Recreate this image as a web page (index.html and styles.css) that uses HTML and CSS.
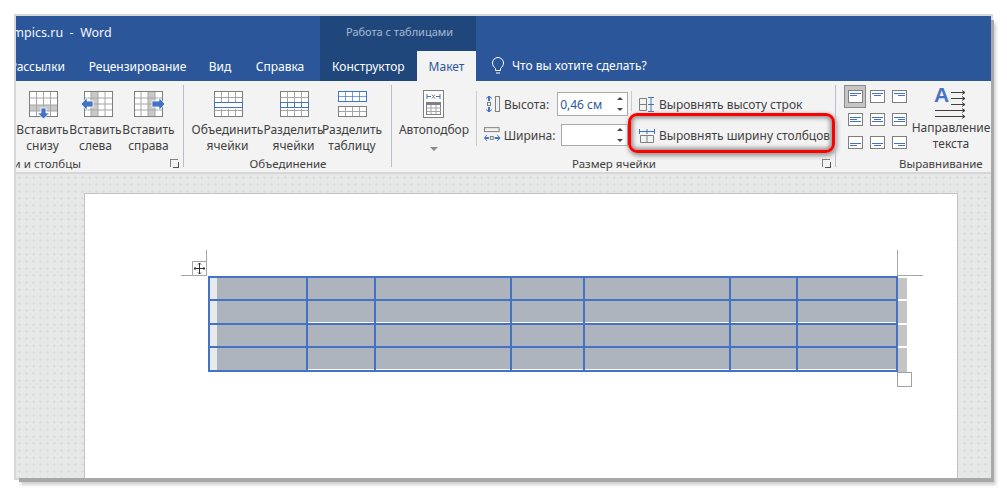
FILE: index.html
```html
<!DOCTYPE html>
<html lang="ru">
<head>
<meta charset="utf-8">
<title>Word</title>
<link rel="stylesheet" href="styles.css">
</head>
<body>
<div class="window">
  <header class="head">
    <div class="titlerow">
      <div class="doctitle"><span class="clip-title">Lumpics.ru&nbsp; -&nbsp; Word</span></div>
      <div class="context">Работа с таблицами</div>
    </div>
    <nav class="tabs">
      <span class="tab t-mail">Рассылки</span>
      <span class="tab t-rev">Рецензирование</span>
      <span class="tab t-view">Вид</span>
      <span class="tab t-help">Справка</span>
      <span class="tab t-ctor">Конструктор</span>
      <span class="tab t-layout">Макет</span>
      <span class="tell">
        <svg width="14" height="19" viewBox="0 0 14 19" fill="none" stroke="#fff" stroke-width="1"><path d="M4.5 12.5C3 11 1.5 9.500 1.500 7a5.500 5.500 0 0 1 11 0c0 2.500-1.500 4-3 5.500v2h-5z"/><path d="M5 17h4"/></svg>
        <span>Что вы хотите сделать?</span>
      </span>
    </nav>
  </header>

  <section class="ribbon">
    <div class="group g-rows">
      <div class="gbody">
        <div class="rb w53">
          <svg class="ic" width="32" height="32" viewBox="0 0 32 32"><rect x="2.500" y="1.500" width="28" height="25" fill="#fff" stroke="#7f7f7f"/><rect x="3" y="15" width="27" height="6" fill="#c9c9c9"/><path d="M3 8h27M3 15h27M3 21h27M9.500 2v24M16.500 2v24M23.500 2v24" stroke="#a6a6a6" fill="none"/><path d="M14 18h5v5h3.500l-6 6-6-6H14z" fill="#4472c4" stroke="#fff" stroke-width=".8"/></svg>
          <span class="lb">Вставить<br>снизу</span>
        </div>
        <div class="rb w53">
          <svg class="ic" width="32" height="32" viewBox="0 0 32 32"><rect x="4.500" y="1.500" width="28" height="25" fill="#fff" stroke="#7f7f7f"/><rect x="11" y="2" width="7" height="24" fill="#c9c9c9"/><path d="M5 8h27M5 14h27M5 20h27M11 2v24M18 2v24M25 2v24" stroke="#a6a6a6" fill="none"/><path d="M13 11v6H7v3.500l-6-6.500 6-6.500V11z" fill="#4472c4" stroke="#fff" stroke-width=".8"/></svg>
          <span class="lb">Вставить<br>слева</span>
        </div>
        <div class="rb w53">
          <svg class="ic" width="32" height="32" viewBox="0 0 32 32"><rect x="1.500" y="1.500" width="28" height="25" fill="#fff" stroke="#7f7f7f"/><rect x="15" y="2" width="7" height="24" fill="#c9c9c9"/><path d="M2 8h27M2 14h27M2 20h27M8 2v24M15 2v24M22 2v24" stroke="#a6a6a6" fill="none"/><path d="M19 11v6h7v3.500l6-6.500-6-6.500V11z" fill="#4472c4" stroke="#fff" stroke-width=".8"/></svg>
          <span class="lb">Вставить<br>справа</span>
        </div>
      </div>
      <div class="glabel"><span class="clip-label">Строки и столбцы</span></div>
      <span class="launch"></span>
    </div>

    <div class="group g-merge">
      <div class="gbody">
        <div class="rb w67">
          <svg class="ic" width="30" height="32" viewBox="0 0 30 32"><rect x="1.500" y="1.500" width="28" height="25" fill="#fff" stroke="#7f7f7f"/><path d="M2 7.500h27M2 20.500h27M8.500 2v11M15.500 2v11M22.500 2v11M8.500 19v7M15.500 19v7M22.500 19v7" stroke="#a6a6a6" fill="none"/><rect x="1.500" y="12.500" width="28" height="5" fill="#fff" stroke="#4472c4"/></svg>
          <span class="lb">Объединить<br>ячейки</span>
        </div>
        <div class="rb w65">
          <svg class="ic" width="30" height="32" viewBox="0 0 30 32"><rect x="1.500" y="1.500" width="28" height="25" fill="#fff" stroke="#7f7f7f"/><path d="M2 7.500h27M2 20.500h27M8.500 2v11M15.500 2v11M22.500 2v11M8.500 19v7M15.500 19v7M22.500 19v7" stroke="#a6a6a6" fill="none"/><rect x="1.500" y="12.500" width="28" height="5" fill="#fff" stroke="#4472c4"/><path d="M8.500 13v5M15.500 13v5M22.500 13v5" stroke="#4472c4"/></svg>
          <span class="lb">Разделить<br>ячейки</span>
        </div>
        <div class="rb w52">
          <svg class="ic" width="30" height="32" viewBox="0 0 30 32"><rect x="1.500" y="1.500" width="28" height="10" fill="#fff" stroke="#4472c4"/><path d="M2 6.500h27M8.500 2v9M15.500 2v9M22.500 2v9" stroke="#4472c4" fill="none" opacity=".7"/><rect x="1.500" y="16.500" width="28" height="10" fill="#fff" stroke="#7f7f7f"/><path d="M2 21.500h27M8.500 17v9M15.500 17v9M22.500 17v9" stroke="#a6a6a6" fill="none"/></svg>
          <span class="lb">Разделить<br>таблицу</span>
        </div>
      </div>
      <div class="glabel">Объединение</div>
    </div>

    <div class="group g-size">
      <div class="gbody sizebody">
        <div class="rb w84">
          <svg class="ic" width="22" height="32" viewBox="0 0 22 32"><rect x=".5" y=".5" width="20" height="27" fill="#fff" stroke="#7f7f7f"/><path d="M4 4v5M17 4v5M4 6.500h4M13 6.500h4" stroke="#4472c4" fill="none"/><path d="M9 4.500l3 4M12 4.500l-3 4" stroke="#7f7f7f" fill="none"/><rect x="3" y="12" width="15" height="3" fill="#7f7f7f"/><rect x="3.500" y="14.500" width="14" height="10" fill="#fff" stroke="#7f7f7f"/><path d="M4 18h14M4 21.500h14M8 15v9M13 15v9" stroke="#a6a6a6" fill="none"/></svg>
          <span class="lb">Автоподбор</span>
          <span class="caret"></span>
        </div>
        <div class="vsep"></div>
        <div class="dims">
          <div class="dimrow">
            <svg width="17" height="16" viewBox="0 0 17 16" fill="none"><rect x="11.500" y=".5" width="4" height="15" stroke="#7f7f7f"/><rect x="3.500" y="6.500" width="3" height="3" stroke="#7f7f7f"/><path d="M5 0v5M5 11v5" stroke="#4472c4" stroke-width="2"/><path d="M2 2.500L5 0l3 2.500M2 13.500L5 16l3-2.500" stroke="#4472c4"/></svg>
            <span class="dimlabel">Высота:</span>
            <span class="spin s-h"><span class="val">0,46 см</span><span class="arrows"><i class="up"></i><i class="dn"></i></span></span>
          </div>
          <div class="dimrow second">
            <svg width="17" height="16" viewBox="0 0 17 16" fill="none"><rect x=".5" y=".5" width="15" height="4" stroke="#7f7f7f"/><rect x="6.500" y="9.500" width="3" height="3" stroke="#7f7f7f"/><path d="M1 11h4M11 11h5" stroke="#4472c4" stroke-width="2"/><path d="M3 8l-2.500 3L3 14M13.500 8l3 3-3 3" stroke="#4472c4"/></svg>
            <span class="dimlabel">Ширина:</span>
            <span class="spin s-w"><span class="val"></span><span class="arrows"><i class="up"></i><i class="dn"></i></span></span>
          </div>
        </div>
        <div class="vsep short"></div>
        <div class="dist">
          <div class="distrow">
            <svg width="16" height="15" viewBox="0 0 16 15" fill="none"><path d="M.5 1.500h7v12h-7zM.5 7.500h7" stroke="#7f7f7f"/><path d="M9 .5h6M9 14.500h6M9 7.500h6M12 1v13" stroke="#4472c4"/></svg>
            <span>Выровнять высоту строк</span>
          </div>
          <div class="distrow row-b">
            <svg width="16" height="15" viewBox="0 0 16 15" fill="none"><path d="M.5 1v5M15.500 1v5M8 1v5M0 3.500h16" stroke="#4472c4"/><path d="M1.500 7.500h13v7h-13zM8 8v6" stroke="#7f7f7f"/></svg>
            <span>Выровнять ширину столбцов</span>
          </div>
          <div class="redbox"></div>
        </div>
      </div>
      <div class="glabel size-label">Размер ячейки</div>
      <span class="launch"></span>
    </div>

    <div class="group g-align">
      <div class="gbody">
        <div class="aligngrid">
          <span class="ac on"><b class="al tl"></b></span>
          <span class="ac"><b class="al tc"></b></span>
          <span class="ac"><b class="al tr"></b></span>
          <span class="ac"><b class="al ml"></b></span>
          <span class="ac"><b class="al mc"></b></span>
          <span class="ac"><b class="al mr"></b></span>
          <span class="ac"><b class="al bl"></b></span>
          <span class="ac"><b class="al bc"></b></span>
          <span class="ac"><b class="al br"></b></span>
        </div>
        <div class="rb w76">
          <span class="dir">
            <span class="bigA">A</span>
            <svg class="dirlines" width="33" height="32" viewBox="0 0 33 32" fill="none" stroke="#404040"><path d="M17 2.500h14M28 .5l3 2-3 2M17 8.500h14M28 6.500l3 2-3 2M17 14.500h14M28 12.500l3 2-3 2M1 20.500h30M28 18.500l3 2-3 2M1 26.500h30M28 24.500l3 2-3 2M1 32.500h30"/></svg>
          </span>
          <span class="lb">Направление<br>текста</span>
        </div>
      </div>
      <div class="glabel align-label">Выравнивание</div>
    </div>
  </section>

  <main class="docarea">
    <div class="page">
      <div class="tablewrap">
        <span class="mark m-lv"></span>
        <span class="mark m-lh"></span>
        <span class="mark m-rv"></span>
        <span class="mark m-rh"></span>
        <span class="movebox">
          <svg width="11" height="11" viewBox="0 0 11 11" fill="none" stroke="#333"><path d="M5.500 0v11M0 5.500h11M4 1.500L5.500 0 7 1.500M4 9.500L5.500 11 7 9.500M1.500 4L0 5.500 1.500 7M9.500 4L11 5.500 9.500 7"/></svg>
        </span>
        <div class="grid">
          <div class="c first"></div><div class="c"></div><div class="c"></div><div class="c"></div><div class="c"></div><div class="c"></div><div class="c"></div>
          <div class="c first tall"></div><div class="c tall"></div><div class="c tall"></div><div class="c tall"></div><div class="c tall"></div><div class="c tall"></div><div class="c tall"></div>
          <div class="c first"></div><div class="c"></div><div class="c"></div><div class="c"></div><div class="c"></div><div class="c"></div><div class="c"></div>
          <div class="c first tall"></div><div class="c tall"></div><div class="c tall"></div><div class="c tall"></div><div class="c tall"></div><div class="c tall"></div><div class="c tall"></div>
        </div>
        <div class="endmarks">
          <span class="e e1"></span><span class="e e2"></span><span class="e e3"></span><span class="e e4"></span>
          <span class="resize"></span>
        </div>
      </div>
    </div>
  </main>
</div>
</body>
</html>
```
FILE: styles.css
```css
* { box-sizing: border-box; }
html, body { margin: 0; padding: 0; }
body {
  width: 1007px;
  height: 494px;
  overflow: hidden;
  background: #fff;
  font-family: "Noto Sans", "Open Sans", sans-serif;
  font-size: 12px;
  color: #3f3f3f;
  padding: 16px 16px 0;
}
.window {
  width: 975px;
  height: 462px;
  display: flex;
  flex-direction: column;
  overflow: hidden;
  box-shadow: 3px 4px 0 #a8a8a8, 0 0 0 2px #d8d8d8, 5px 7px 3px #d0d0d0;
}

/* header */
.head { background: #2b579a; color: #fff; height: 65px; flex: none; }
.titlerow { display: flex; height: 35px; }
.doctitle { width: 304px; overflow: hidden; line-height: 34px; white-space: nowrap; font-size: 12.500px; color: #f4f6fa; }
.clip-title { display: block; margin-left: -18px; }
.context { width: 156px; background: #20477b; color: #a8bad3; font-size: 11px; line-height: 32px; padding-left: 26px; }
.tabs { display: flex; height: 30px; align-items: stretch; }
.tab { display: flex; align-items: center; white-space: nowrap; flex: none; }
.t-mail { width: 76px; justify-content: flex-end; padding-right: 27px; overflow: hidden; }
.t-mail { width: 49px; padding-right: 0; margin-right: 27px; }
.t-rev { width: 91px; margin-right: 27px; justify-content: center; }
.t-view { width: 20px; margin-right: 27px; justify-content: center; }
.t-help { width: 46px; margin-right: 17px; justify-content: center; }
.t-ctor { width: 97px; background: #20477b; padding-left: 12px; }
.t-layout { width: 59px; background: #f3f3f3; color: #2b579a; justify-content: center; }
.tell { display: flex; align-items: center; gap: 7px; padding-left: 15px; padding-bottom: 2px; }

/* ribbon */
.ribbon { display: flex; height: 93px; flex: none; background: #f3f3f3; border-bottom: 2px solid #d6d6d6; }
.group { position: relative; height: 91px; flex: none; padding-top: 4px; display: flex; flex-direction: column; }
.group::after { content: ""; position: absolute; right: 0; top: 4px; bottom: 5px; width: 1px; background: #b9c0c7; }
.gbody { display: flex; height: 71px; }
.glabel { text-align: center; line-height: 16px; white-space: nowrap; font-size: 11.500px; overflow: hidden; }
.g-rows { width: 168px; }
.clip-label { display: block; width: 65px; direction: rtl; text-align: right; white-space: nowrap; overflow: hidden; }
.g-merge { width: 208px; }
.g-merge .gbody { padding-left: 10px; }
.g-merge .glabel { padding-right: 0; }
.g-size { width: 444px; }
.g-align { width: 155px; }
.g-align::after { display: none; }
.rb { display: flex; flex-direction: column; align-items: center; flex: none; }
.w53 { width: 53px; }
.w67 { width: 67px; }
.w65 { width: 65px; }
.w52 { width: 52px; }
.w84 { width: 84px; }
.w76 { width: 76px; }
.ic { display: block; flex: none; margin-top: 5px; margin-bottom: 3px; overflow: visible; }
.lb { line-height: 16px; text-align: center; white-space: nowrap; margin-top: -3px; }
.caret { width: 0; height: 0; border: 4px solid transparent; border-top-color: #8a8a8a; border-bottom: 0; margin-top: 9px; }
.launch { position: absolute; right: 6px; bottom: 5px; width: 8px; height: 8px; border-left: 1px solid #7f7f7f; border-top: 1px solid #7f7f7f; }
.launch::after { content: ""; position: absolute; left: 2px; top: 2px; width: 5px; height: 5px; border-right: 1px solid #555; border-bottom: 1px solid #555; }

/* size group */
.sizebody { align-items: flex-start; position: relative; }
.vsep { width: 1px; height: 55px; background: #c6cbd0; margin-top: 6px; flex: none; }
.vsep.short { height: 20px; margin-left: 3px; }
.dims { width: 151px; padding: 7px 0 0 7px; flex: none; }
.dimrow { display: flex; align-items: center; height: 24px; }
.dimrow.second { margin-top: 8px; height: 22px; }
.dimlabel { margin-left: 3px; }
.spin { display: flex; border: 1px solid #ababab; background: #fff; align-items: center; height: 100%; }
.s-h { width: 71px; margin-left: 8px; }
.s-w { width: 69px; margin-left: 5px; }
.val { flex: 1; padding-left: 2px; color: #2b579a; }
.arrows { width: 14px; display: flex; flex-direction: column; gap: 8px; align-items: center; }
.arrows i { display: block; width: 0; height: 0; border: 3px solid transparent; }
.arrows .up { border-bottom-color: #444; border-top: 0; }
.arrows .dn { border-top-color: #444; border-bottom: 0; }
.dist { position: relative; flex: 1; padding: 7px 0 0 7px; }
.distrow { display: flex; align-items: center; gap: 4px; height: 24px; white-space: nowrap; }
.row-b { margin-top: 7px; }
.redbox { position: absolute; left: -4px; top: 28px; width: 207px; height: 40px; border: 3px solid #f00; border-radius: 9px; box-shadow: inset 0 0 4px 2px #8f8f8f, 1px 2px 4px 1px #9a9a9a; }
.size-label { padding-left: 0; }

/* alignment */
.aligngrid { display: grid; grid-template-columns: repeat(3, 22px); grid-template-rows: repeat(3, 23px); margin-left: 8px; margin-top: 0; flex: none; width: 66px; }
.ac { display: flex; align-items: center; justify-content: center; border: 1px solid transparent; }
.ac.on { background: #c5c5c5; border: 1px solid #8a8a8a; }
.al { display: block; width: 15px; height: 13px; border: 1px solid #7f7f7f; background-color: #fff; background-repeat: no-repeat; }
.tl { background-image: linear-gradient(#4472c4, #4472c4), linear-gradient(#4472c4, #4472c4); background-size: 11px 1px, 7px 1px; background-position: 1px 2px, 1px 4px; }
.tc { background-image: linear-gradient(#4472c4, #4472c4), linear-gradient(#4472c4, #4472c4); background-size: 11px 1px, 7px 1px; background-position: 1px 2px, 3px 4px; }
.tr { background-image: linear-gradient(#4472c4, #4472c4), linear-gradient(#4472c4, #4472c4); background-size: 11px 1px, 7px 1px; background-position: 1px 2px, 5px 4px; }
.ml { background-image: linear-gradient(#4472c4, #4472c4), linear-gradient(#4472c4, #4472c4), linear-gradient(#4472c4, #4472c4); background-size: 11px 1px, 7px 1px, 11px 1px; background-position: 1px 3px, 1px 5px, 1px 7px; }
.mc { background-image: linear-gradient(#4472c4, #4472c4), linear-gradient(#4472c4, #4472c4), linear-gradient(#4472c4, #4472c4); background-size: 11px 1px, 7px 1px, 11px 1px; background-position: 1px 3px, 3px 5px, 1px 7px; }
.mr { background-image: linear-gradient(#4472c4, #4472c4), linear-gradient(#4472c4, #4472c4), linear-gradient(#4472c4, #4472c4); background-size: 11px 1px, 7px 1px, 11px 1px; background-position: 1px 3px, 5px 5px, 1px 7px; }
.bl { background-image: linear-gradient(#4472c4, #4472c4), linear-gradient(#4472c4, #4472c4); background-size: 11px 1px, 7px 1px; background-position: 1px 6px, 1px 8px; }
.bc { background-image: linear-gradient(#4472c4, #4472c4), linear-gradient(#4472c4, #4472c4); background-size: 11px 1px, 7px 1px; background-position: 1px 6px, 3px 8px; }
.br { background-image: linear-gradient(#4472c4, #4472c4), linear-gradient(#4472c4, #4472c4); background-size: 11px 1px, 7px 1px; background-position: 1px 6px, 5px 8px; }
.w76 { margin-left: 3px; }
.dir { position: relative; display: block; width: 34px; height: 34px; margin-top: 1px; margin-bottom: 3px; flex: none; }
.bigA { position: absolute; left: 0; top: -3px; font-family: "Liberation Sans", sans-serif; font-size: 21px; line-height: 24px; font-weight: 700; color: #4472c4; }
.dirlines { position: absolute; left: 0; top: 4px; }
.align-label { padding-left: 63px; text-align: left; }

/* document */
.docarea {
  flex: 1;
  background-color: #e6e8e7;
  background-image: radial-gradient(#d9dcdb 1px, transparent 1.200px);
  background-size: 7px 7px;
  padding: 19px 33px 0 68px;
  display: flex;
  min-height: 0;
}
.page { flex: 1; background: #fff; border: 1px solid #c4c4c4; border-width: 1px 1px 0 1px; padding: 82px 0 0 123px; }
.tablewrap { position: relative; display: flex; width: 699px; }
.grid {
  display: grid;
  grid-template-columns: 96px 66px 134px 71px 144px 65px 98px;
  grid-auto-rows: min-content;
  gap: 2px;
  padding: 2px;
  background: #4472c4;
  width: 690px;
  flex: none;
}
.c { height: 21px; background: #adb4bd; }
.c.tall { height: 22px; border-bottom: 1px solid #fff; }
.c.first { background: linear-gradient(90deg, #e8e9e9 7px, #adb4bd 7px); }
.c.first.tall { border-bottom: 0; }
.endmarks { width: 9px; display: flex; flex-direction: column; padding-top: 2px; gap: 2px; position: relative; }
.e { display: block; background: #c4c4c4; }
.e1 { height: 21px; }
.e2 { height: 22px; }
.e3 { height: 21px; }
.e4 { height: 24px; }
.resize { position: absolute; left: -1px; top: 96px; width: 15px; height: 15px; border: 1px solid #a0a0a0; background: #fff; }
.mark { position: absolute; background: #a6a6a6; }
.m-lv { left: -2px; top: -26px; width: 1px; height: 26px; }
.m-lh { left: -27px; top: -1px; width: 25px; height: 1px; }
.m-rv { left: 689px; top: -26px; width: 1px; height: 26px; }
.m-rh { left: 690px; top: -1px; width: 25px; height: 1px; }
.movebox { position: absolute; left: -16px; top: -15px; width: 15px; height: 15px; border: 1px solid #a6a6a6; background: #fff; display: flex; align-items: center; justify-content: center; }
```
